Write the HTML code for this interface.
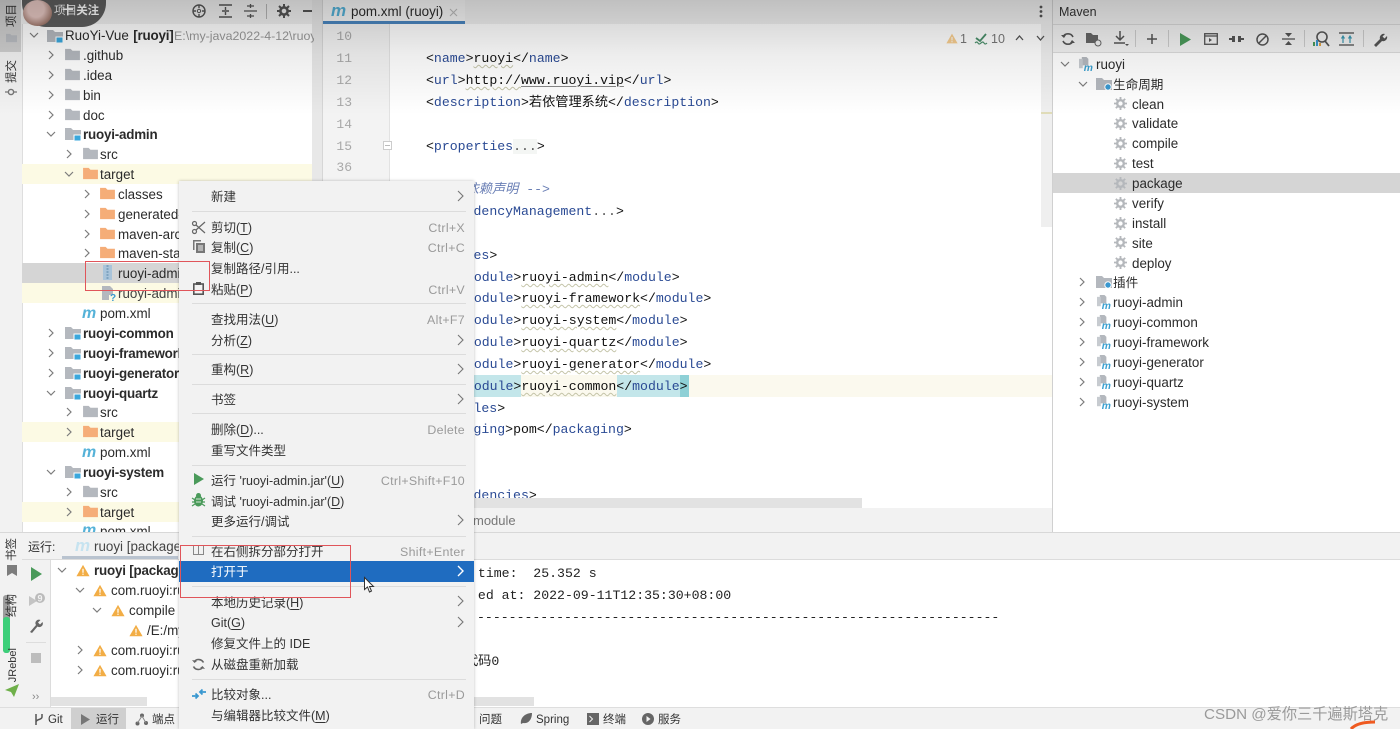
<!DOCTYPE html>
<html><head><meta charset="utf-8"><style>
html,body{margin:0;padding:0;background:#fff}
#p{position:relative;width:1400px;height:729px;overflow:hidden;background:#fff;font-family:"Liberation Sans","Noto Sans CJK SC",sans-serif;color:#2b2b2b}
.a{position:absolute}
.t{position:absolute;font-size:13.4px;line-height:20px;height:20px;white-space:nowrap;margin-top:1px}
.b,.t b{font-weight:bold;letter-spacing:-.2px}
.c{position:absolute;font:13.2px/22px "Liberation Mono","Noto Sans CJK SC",monospace;white-space:pre;color:#111;height:22px;margin-top:1px}
.c i{font-style:normal;color:#2a4a94}
.w{text-decoration:underline wavy #c4c4a8 1px;text-underline-offset:2px}
.l{text-decoration:underline #888 1px;text-underline-offset:2px}
.n{position:absolute;left:330px;width:22px;text-align:right;font:13px/22px "Liberation Mono",monospace;color:#a8a8a8;margin-top:1px}
.m{position:absolute;left:211px;font-size:12.5px;line-height:20px;white-space:nowrap;color:#333;margin-top:1px}
.m u{text-underline-offset:2px}
.s{position:absolute;right:935px;font-size:12.4px;line-height:20px;color:#9a9a9a;white-space:nowrap;letter-spacing:.3px;margin-top:1px}
.h{position:absolute;left:192px;width:274px;height:1px;background:#dcdcdc}
.ar{position:absolute;left:456px;width:8px;height:10px}
svg{position:absolute;overflow:visible}
.side{position:absolute;font-size:11.5px;color:#333;writing-mode:vertical-rl;text-orientation:sideways;transform:rotate(180deg);line-height:14px;white-space:nowrap}
.st{position:absolute;top:712px;font-size:11.5px;line-height:17px;color:#333;white-space:nowrap}
</style></head><body><div id="p">
<svg width="0" height="0" style="position:absolute"><defs>
<symbol id="f" viewBox="0 0 16 14"><path d="M0 1h6l2 2h8v10H0z" fill="#b4b8be"/></symbol>
<symbol id="o" viewBox="0 0 16 14"><path d="M0 1h6l2 2h8v10H0z" fill="#f5ad78"/></symbol>
<symbol id="mf" viewBox="0 0 16 14"><path d="M0 1h6l2 2h8v10H0z" fill="#b4b8be"/><rect x="9" y="8" width="7" height="6" fill="#3aa7dc" stroke="#fff"/></symbol>
<symbol id="r" viewBox="0 0 10 10"><path d="M3 1l4 4-4 4" fill="none" stroke="#7c7c7c" stroke-width="1.2"/></symbol>
<symbol id="d" viewBox="0 0 10 10"><path d="M1 3l4 4 4-4" fill="none" stroke="#7c7c7c" stroke-width="1.2"/></symbol>
<symbol id="g" viewBox="0 0 14 14"><circle cx="7" cy="7" r="3.6" fill="none" stroke="#b5b8bc" stroke-width="2.6"/><path d="M7 0v3M7 11v3M0 7h3M11 7h3M2 2l2 2M10 10l2 2M12 2l-2 2M2 12l2-2" stroke="#b5b8bc" stroke-width="2"/></symbol>
<symbol id="w" viewBox="0 0 16 14"><path d="M8 .5L15.5 13.5H.5z" fill="#f2ad45"/><path d="M8 5v4.5M8 10.5v1.5" stroke="#fff" stroke-width="1.4"/></symbol>
<symbol id="mv" viewBox="0 0 16 17"><path d="M3 1h5l2 2v7H3z" fill="#b4b8be"/><rect x="0" y="3" width="4" height="10" fill="#c7cbd0"/><text x="5" y="16" font-family="Liberation Sans" font-size="11" font-style="italic" font-weight="bold" fill="#3aa0d0">m</text></symbol>
<symbol id="cf" viewBox="0 0 16 14"><path d="M0 1h6l2 2h8v10H0z" fill="#b4b8be"/><circle cx="12" cy="10" r="3.2" fill="#3a98d0" stroke="#fff"/></symbol>
</defs></svg>

<!-- left side strip -->
<div class="a" style="left:0;top:0;width:22px;height:708px;background:#f2f2f2;border-right:1px solid #dedede"></div>
<div class="a" style="left:0;top:0;width:21px;height:52px;background:#cfcfcf"></div>
<div class="side" style="left:5px;top:4px">项目</div>
<svg style="left:6px;top:33px" width="11" height="10"><use href="#f" width="11" height="10" style="opacity:.8"/></svg>
<div class="side" style="left:5px;top:60px">提交</div>
<svg style="left:5px;top:87px" width="12" height="10"><circle cx="6" cy="5" r="2.6" fill="none" stroke="#777" stroke-width="1.4"/><path d="M0 5h3M9 5h3" stroke="#777" stroke-width="1.3"/></svg>
<div class="side" style="left:5px;top:538px">书签</div>
<svg style="left:7px;top:565px" width="10" height="11"><path d="M0 0h10v11L5 8 0 11z" fill="#7d7d7d"/></svg>
<div class="a" style="left:3px;top:595px;width:7px;height:58px;background:#9d9d9d;border-radius:3px"></div>
<div class="a" style="left:3px;top:617px;width:7px;height:36px;background:#3dcf7a;border-radius:3px"></div>
<div class="side" style="left:5px;top:594px">结构</div>
<div class="side" style="left:6px;top:648px;font-size:11px">JRebel</div>
<svg style="left:5px;top:684px" width="14" height="14"><path d="M0 6L14 0 9 13 6 8z" fill="#6fb04a"/></svg>

<!-- project tool header -->
<div class="a" style="left:22px;top:0;width:300px;height:24px;background:#f0f0f0"></div>
<div class="a" style="left:22px;top:0;width:84px;height:27px;background:#5e5e5e;border-radius:0 0 24px 24px"></div>
<div class="a" style="left:23px;top:0;width:29px;height:26px;border-radius:50%;background:radial-gradient(circle at 45% 35%,#e8c9c4 0 35%,#a78074 70%,#5a453d 100%)"></div>
<div class="a" style="left:54px;top:3px;font-size:11.5px;color:#eee;line-height:16px;white-space:nowrap">项目</div>
<div class="a b" style="left:62px;top:3px;font-size:11.5px;color:#fff;line-height:16px;white-space:nowrap">十 关注</div>
<svg style="left:192px;top:4px" width="14" height="14"><circle cx="7" cy="7" r="6" fill="none" stroke="#555" stroke-width="1.4"/><circle cx="7" cy="7" r="1.7" fill="none" stroke="#555"/><path d="M7 1v3M7 10v3M1 7h3M10 7h3" stroke="#555" stroke-width="1.4"/></svg>
<svg style="left:219px;top:4px" width="13" height="14"><path d="M0 1h13M0 13h13M3 7h7M6.500 3v3M6.500 11V8" stroke="#555" stroke-width="1.4" fill="none"/></svg>
<svg style="left:244px;top:4px" width="13" height="14"><path d="M0 7h13M3 2h7M3 12h7M6.500 0v4M6.500 14v-4" stroke="#555" stroke-width="1.3" fill="none"/></svg>
<div class="a" style="left:266px;top:4px;width:1px;height:15px;background:#b5b5b5"></div>
<svg style="left:277px;top:4px" width="14" height="14" viewBox="0 0 14 14"><circle cx="7" cy="7" r="3.6" fill="none" stroke="#555" stroke-width="2.6"/><path d="M7 0v3M7 11v3M0 7h3M11 7h3M2 2l2 2M10 10l2 2M12 2l-2 2M2 12l2-2" stroke="#555" stroke-width="2"/></svg>
<div class="a" style="left:303px;top:10px;width:12px;height:2px;background:#555"></div>

<!-- project tree -->
<div class="a" style="left:22px;top:164px;width:300px;height:20px;background:#fcfae4"></div>
<div class="a" style="left:22px;top:283px;width:300px;height:20px;background:#fcfae4"></div>
<div class="a" style="left:22px;top:422px;width:300px;height:20px;background:#fcfae4"></div>
<div class="a" style="left:22px;top:502px;width:300px;height:20px;background:#fcfae4"></div>
<div class="a" style="left:22px;top:263px;width:300px;height:20px;background:#d5d5d5"></div>
<div class="a" style="left:312px;top:0;width:10px;height:182px;background:#e8e8e8"></div>
<div class="a" style="left:322px;top:0;width:1px;height:532px;background:#d6d6d6"></div>

<svg style="left:29px;top:30px" width="10" height="10"><use href="#d" width="10" height="10"/></svg><svg style="left:47px;top:29px" width="16" height="14"><use href="#mf" width="16" height="14"/></svg><div class="t" style="left:65px;top:25px">RuoYi-Vue<b style="margin-left:1px"> [ruoyi]</b><span style="color:#999;position:absolute;left:109px;top:0;width:140px;overflow:hidden;font-size:12.4px">E:\my-java2022-4-12\ruoyi</span></div>
<svg style="left:46px;top:50px" width="10" height="10"><use href="#r" width="10" height="10"/></svg><svg style="left:65px;top:48px" width="15" height="13"><use href="#f" width="15" height="13"/></svg><div class="t" style="left:83px;top:45px">.github</div>
<svg style="left:46px;top:70px" width="10" height="10"><use href="#r" width="10" height="10"/></svg><svg style="left:65px;top:68px" width="15" height="13"><use href="#f" width="15" height="13"/></svg><div class="t" style="left:83px;top:65px">.idea</div>
<svg style="left:46px;top:90px" width="10" height="10"><use href="#r" width="10" height="10"/></svg><svg style="left:65px;top:88px" width="15" height="13"><use href="#f" width="15" height="13"/></svg><div class="t" style="left:83px;top:85px">bin</div>
<svg style="left:46px;top:110px" width="10" height="10"><use href="#r" width="10" height="10"/></svg><svg style="left:65px;top:108px" width="15" height="13"><use href="#f" width="15" height="13"/></svg><div class="t" style="left:83px;top:105px">doc</div>
<svg style="left:46px;top:129px" width="10" height="10"><use href="#d" width="10" height="10"/></svg><svg style="left:65px;top:127px" width="16" height="14"><use href="#mf" width="16" height="14"/></svg><div class="t b" style="left:83px;top:124px">ruoyi-admin</div>
<svg style="left:64px;top:149px" width="10" height="10"><use href="#r" width="10" height="10"/></svg><svg style="left:83px;top:147px" width="15" height="13"><use href="#f" width="15" height="13"/></svg><div class="t" style="left:100px;top:144px">src</div>
<svg style="left:64px;top:169px" width="10" height="10"><use href="#d" width="10" height="10"/></svg><svg style="left:83px;top:167px" width="15" height="13"><use href="#o" width="15" height="13"/></svg><div class="t" style="left:100px;top:164px">target</div>
<svg style="left:82px;top:189px" width="10" height="10"><use href="#r" width="10" height="10"/></svg><svg style="left:100px;top:187px" width="15" height="13"><use href="#o" width="15" height="13"/></svg><div class="t" style="left:118px;top:184px">classes</div>
<svg style="left:82px;top:209px" width="10" height="10"><use href="#r" width="10" height="10"/></svg><svg style="left:100px;top:207px" width="15" height="13"><use href="#o" width="15" height="13"/></svg><div class="t" style="left:118px;top:204px">generated-sources</div>
<svg style="left:82px;top:229px" width="10" height="10"><use href="#r" width="10" height="10"/></svg><svg style="left:100px;top:227px" width="15" height="13"><use href="#o" width="15" height="13"/></svg><div class="t" style="left:118px;top:224px">maven-archiver</div>
<svg style="left:82px;top:248px" width="10" height="10"><use href="#r" width="10" height="10"/></svg><svg style="left:100px;top:246px" width="15" height="13"><use href="#o" width="15" height="13"/></svg><div class="t" style="left:118px;top:243px">maven-status</div>
<svg style="left:103px;top:265px" width="9" height="15"><rect width="9" height="15" fill="#a9c4da"/><path d="M4.500 0v15" stroke="#7fa3c0" stroke-dasharray="2 1" stroke-width="2"/></svg><div class="t" style="left:118px;top:263px">ruoyi-admin.jar</div>
<svg style="left:102px;top:286px" width="15" height="15"><path d="M0 0h8l3 3v6H7v5H0z" fill="#b4b8be"/><text x="8" y="15" font-family="Liberation Sans" font-size="10" font-weight="bold" fill="#3a98d0">?</text></svg><div class="t" style="left:118px;top:283px;color:#444">ruoyi-admin.jar.original</div>
<div class="t" style="left:82px;top:303px;font:italic bold 16px/20px 'Liberation Sans';color:#55b2d8">m</div><div class="t" style="left:100px;top:303px">pom.xml</div>
<svg style="left:46px;top:328px" width="10" height="10"><use href="#r" width="10" height="10"/></svg><svg style="left:65px;top:326px" width="16" height="14"><use href="#mf" width="16" height="14"/></svg><div class="t b" style="left:83px;top:323px">ruoyi-common</div>
<svg style="left:46px;top:348px" width="10" height="10"><use href="#r" width="10" height="10"/></svg><svg style="left:65px;top:346px" width="16" height="14"><use href="#mf" width="16" height="14"/></svg><div class="t b" style="left:83px;top:343px">ruoyi-framework</div>
<svg style="left:46px;top:368px" width="10" height="10"><use href="#r" width="10" height="10"/></svg><svg style="left:65px;top:366px" width="16" height="14"><use href="#mf" width="16" height="14"/></svg><div class="t b" style="left:83px;top:363px">ruoyi-generator</div>
<svg style="left:46px;top:388px" width="10" height="10"><use href="#d" width="10" height="10"/></svg><svg style="left:65px;top:386px" width="16" height="14"><use href="#mf" width="16" height="14"/></svg><div class="t b" style="left:83px;top:383px">ruoyi-quartz</div>
<svg style="left:64px;top:407px" width="10" height="10"><use href="#r" width="10" height="10"/></svg><svg style="left:83px;top:405px" width="15" height="13"><use href="#f" width="15" height="13"/></svg><div class="t" style="left:100px;top:402px">src</div>
<svg style="left:64px;top:427px" width="10" height="10"><use href="#r" width="10" height="10"/></svg><svg style="left:83px;top:425px" width="15" height="13"><use href="#o" width="15" height="13"/></svg><div class="t" style="left:100px;top:422px">target</div>
<div class="t" style="left:82px;top:442px;font:italic bold 16px/20px 'Liberation Sans';color:#55b2d8">m</div><div class="t" style="left:100px;top:442px">pom.xml</div>
<svg style="left:46px;top:467px" width="10" height="10"><use href="#d" width="10" height="10"/></svg><svg style="left:65px;top:465px" width="16" height="14"><use href="#mf" width="16" height="14"/></svg><div class="t b" style="left:83px;top:462px">ruoyi-system</div>
<svg style="left:64px;top:487px" width="10" height="10"><use href="#r" width="10" height="10"/></svg><svg style="left:83px;top:485px" width="15" height="13"><use href="#f" width="15" height="13"/></svg><div class="t" style="left:100px;top:482px">src</div>
<svg style="left:64px;top:507px" width="10" height="10"><use href="#r" width="10" height="10"/></svg><svg style="left:83px;top:505px" width="15" height="13"><use href="#o" width="15" height="13"/></svg><div class="t" style="left:100px;top:502px">target</div>
<div class="a" style="left:22px;top:522px;width:300px;height:10px;overflow:hidden"><div class="t" style="left:60px;top:-2px;font:italic bold 16px/20px 'Liberation Sans';color:#55b2d8">m</div><div class="t" style="left:78px;top:-1px">pom.xml</div></div>

<!-- editor -->
<div class="a" style="left:323px;top:0;width:729px;height:24px;background:#f0f0f0"></div>
<div class="a" style="left:323px;top:0;width:142px;height:24px;background:#f6f6f6"></div>
<div class="a" style="left:323px;top:21px;width:142px;height:3px;background:#4a86c0"></div>
<div class="a" style="left:331px;top:1px;font:italic bold 17px/20px 'Liberation Sans';color:#55b2d8">m</div>
<div class="t" style="left:351px;top:1px">pom.xml (ruoyi)</div>
<svg style="left:449px;top:8px" width="9" height="9"><path d="M1 1l7 7M8 1L1 8" stroke="#bbb" stroke-width="1.1"/></svg>
<svg style="left:1039px;top:5px" width="4" height="13"><circle cx="2" cy="2" r="1.4" fill="#555"/><circle cx="2" cy="6.500" r="1.4" fill="#555"/><circle cx="2" cy="11" r="1.4" fill="#555"/></svg>
<div class="a" style="left:323px;top:24px;width:66px;height:486px;background:#f3f3f3;border-right:1px solid #e2e2e2"></div>
<div class="a" style="left:389px;top:375px;width:663px;height:22px;background:#fbf9ee"></div>
<div class="a" style="left:474px;top:375px;width:47px;height:22px;background:#c3e6ea"></div>
<div class="a" style="left:617px;top:375px;width:72px;height:22px;background:#c3e6ea"></div>
<div class="a" style="left:680px;top:375px;width:9px;height:22px;background:#8ed0d6"></div>
<div class="a" style="left:1041px;top:24px;width:11px;height:203px;background:#efefef"></div>
<div class="a" style="left:1041px;top:112px;width:11px;height:2px;background:#e0dcb8"></div>
<div class="a" style="left:1052px;top:0;width:1px;height:532px;background:#d0d0d0"></div>

<div class="n" style="top:25px">10</div><div class="n" style="top:47px">11</div><div class="n" style="top:69px">12</div><div class="n" style="top:91px">13</div><div class="n" style="top:113px">14</div><div class="n" style="top:135px">15</div><div class="n" style="top:156px">36</div>
<svg style="left:383px;top:141px" width="9" height="9"><rect x=".5" y=".5" width="8" height="8" fill="#fff" stroke="#ccc"/><path d="M2 4.500h5" stroke="#bbb"/></svg>

<div class="c" style="left:426px;top:47px">&lt;<i>name</i>&gt;<span class="w">ruoyi</span>&lt;/<i>name</i>&gt;</div>
<div class="c" style="left:426px;top:69px">&lt;<i>url</i>&gt;<span class="w">http://</span><span class="l">www.ruoyi.vip</span>&lt;/<i>url</i>&gt;</div>
<div class="c" style="left:426px;top:91px">&lt;<i>description</i>&gt;若依管理系统&lt;/<i>description</i>&gt;</div>
<div class="c" style="left:426px;top:135px">&lt;<i>properties</i><span style="background:#f4f6f4;color:#555">...</span>&gt;</div>
<div class="c" style="left:426px;top:178px;color:#6a7fb5;font-style:italic">&lt;!-- 依赖声明 --&gt;</div>
<div class="c" style="left:426px;top:200px">&lt;<i>dependencyManagement</i><span style="color:#555">...</span>&gt;</div>
<div class="c" style="left:426px;top:244px">&lt;<i>modules</i>&gt;</div>
<div class="c" style="left:458px;top:266px">&lt;<i>module</i>&gt;<span class="w">ruoyi-admin</span>&lt;/<i>module</i>&gt;</div>
<div class="c" style="left:458px;top:287px">&lt;<i>module</i>&gt;<span class="w">ruoyi-framework</span>&lt;/<i>module</i>&gt;</div>
<div class="c" style="left:458px;top:309px">&lt;<i>module</i>&gt;<span class="w">ruoyi-system</span>&lt;/<i>module</i>&gt;</div>
<div class="c" style="left:458px;top:331px">&lt;<i>module</i>&gt;<span class="w">ruoyi-quartz</span>&lt;/<i>module</i>&gt;</div>
<div class="c" style="left:458px;top:353px">&lt;<i>module</i>&gt;<span class="w">ruoyi-generator</span>&lt;/<i>module</i>&gt;</div>
<div class="c" style="left:458px;top:375px">&lt;<i>module</i>&gt;<span class="w">ruoyi-common</span>&lt;/<i>module</i>&gt;</div>
<div class="c" style="left:426px;top:397px">&lt;/<i>modules</i>&gt;</div>
<div class="c" style="left:426px;top:418px">&lt;<i>packaging</i>&gt;pom&lt;/<i>packaging</i>&gt;</div>
<div class="c" style="left:426px;top:484px">&lt;<i>dependencies</i>&gt;</div>

<svg style="left:946px;top:33px" width="12" height="11"><use href="#w" width="12" height="11" style="opacity:.6"/></svg>
<div class="t" style="left:960px;top:28px;color:#777;font-size:12.5px">1</div>
<svg style="left:975px;top:33px" width="13" height="12"><path d="M1 5l4 3 6-7" fill="none" stroke="#4a8f6a" stroke-width="1.800"/><path d="M0 10q2-2 3 0t3 0 3 0 3 0" fill="none" stroke="#4a8f6a" stroke-width="1.200"/></svg>
<div class="t" style="left:991px;top:28px;color:#777;font-size:12.5px">10</div>
<svg style="left:1015px;top:34px" width="9" height="7"><path d="M1 6l3.500-4L8 6" fill="none" stroke="#555" stroke-width="1.300"/></svg>
<svg style="left:1036px;top:35px" width="9" height="7"><path d="M1 1l3.500 4L8 1" fill="none" stroke="#555" stroke-width="1.300"/></svg>

<div class="a" style="left:474px;top:498px;width:388px;height:10px;background:#e2e2e2"></div>
<div class="a" style="left:323px;top:508px;width:729px;height:24px;background:#f2f2f2"></div>
<div class="t" style="left:473px;top:510px;color:#777;font-size:13px">module</div>
<div class="a" style="left:0;top:532px;width:1400px;height:1px;background:#d8d8d8"></div>

<!-- maven -->
<div class="a" style="left:1053px;top:0;width:347px;height:24px;background:#f0f0f0;border-bottom:1px solid #d8d8d8"></div>
<div class="t" style="left:1059px;top:1px;font-size:12.5px;color:#333">Maven</div>
<div class="a" style="left:1053px;top:25px;width:347px;height:27px;background:#f2f2f2;border-bottom:1px solid #dcdcdc"></div>
<svg style="left:1061px;top:32px" width="14" height="14"><path d="M12 5A5.500 5.500 0 0 0 2 5M2 9a5.500 5.500 0 0 0 10 0" fill="none" stroke="#555" stroke-width="1.600"/><path d="M0 3l3 3 2-3M14 11l-3-3-2 3" fill="#555"/></svg>
<svg style="left:1086px;top:32px" width="16" height="15"><path d="M0 1h5l2 2h5v8H0z" fill="#666"/><circle cx="12" cy="11" r="3" fill="#f2f2f2" stroke="#666"/></svg>
<svg style="left:1113px;top:31px" width="16" height="16"><path d="M7 0v8M3 5l4 4 4-4M1 12h11" fill="none" stroke="#555" stroke-width="1.500"/><path d="M12 13h4l-2 2z" fill="#555"/></svg>
<div class="a" style="left:1135px;top:30px;width:1px;height:17px;background:#ccc"></div>
<svg style="left:1146px;top:33px" width="12" height="12"><path d="M6 1v10M1 6h10" stroke="#555" stroke-width="1.500"/></svg>
<div class="a" style="left:1168px;top:30px;width:1px;height:17px;background:#ccc"></div>
<svg style="left:1180px;top:33px" width="11" height="13"><path d="M0 0l11 6.500L0 13z" fill="#4a9a5a"/></svg>
<svg style="left:1204px;top:33px" width="14" height="12"><rect x=".7" y=".7" width="12.600" height="10.600" fill="none" stroke="#555" stroke-width="1.300"/><path d="M1 3h12" stroke="#555" stroke-width="1.300"/><path d="M5 5l3 2-3 2z" fill="#555"/></svg>
<svg style="left:1229px;top:31px" width="15" height="16"><path d="M0 8h5M10 8h5" stroke="#555" stroke-width="2"/><rect x="3" y="5" width="3" height="6" fill="#555"/><rect x="9" y="5" width="3" height="6" fill="#555"/><path d="M6 14L9 2" stroke="#f2f2f2" stroke-width="1.500"/></svg>
<svg style="left:1256px;top:33px" width="13" height="13"><circle cx="6.500" cy="6.500" r="5.500" fill="none" stroke="#555" stroke-width="1.500"/><path d="M3 10l7-7" stroke="#555" stroke-width="1.500"/></svg>
<svg style="left:1282px;top:32px" width="13" height="14"><path d="M0 7h13" stroke="#555" stroke-width="1.300"/><path d="M3 1h7L6.500 5zM3 13h7L6.500 9z" fill="#555"/></svg>
<div class="a" style="left:1304px;top:30px;width:1px;height:17px;background:#ccc"></div>
<svg style="left:1313px;top:31px" width="17" height="16"><circle cx="9" cy="6" r="5" fill="none" stroke="#555" stroke-width="1.600"/><path d="M12 10l4 5" stroke="#555" stroke-width="1.800"/><path d="M1 15v-4" stroke="#4a9a5a" stroke-width="2"/><path d="M4 15V9" stroke="#3a98d0" stroke-width="2"/><path d="M7 15v-3" stroke="#e0a040" stroke-width="2"/></svg>
<svg style="left:1339px;top:32px" width="15" height="14"><rect width="15" height="2" fill="#888"/><rect y="12" width="15" height="2" fill="#888"/><path d="M4 11V5M11 11V5M2.500 6.500L4 4l1.500 2.500M9.500 6.500L11 4l1.500 2.500" stroke="#3a98b0" fill="none" stroke-width="1.200"/></svg>
<div class="a" style="left:1363px;top:30px;width:1px;height:17px;background:#ccc"></div>
<svg style="left:1373px;top:32px" width="16" height="15"><path d="M1 13L7 7a4 4 0 0 1 5-5L9.500 4.500l2 2L14 4a4 4 0 0 1-5 5l-6 6z" fill="#555"/></svg>

<div class="a" style="left:1053px;top:173px;width:347px;height:20px;background:#d5d5d5"></div>
<svg style="left:1060px;top:59px" width="10" height="10"><use href="#d" width="10" height="10"/></svg><svg style="left:1079px;top:56px" width="15" height="16"><use href="#mv" width="15" height="16"/></svg><div class="t" style="left:1096px;top:54px">ruoyi</div>
<svg style="left:1078px;top:79px" width="10" height="10"><use href="#d" width="10" height="10"/></svg><svg style="left:1096px;top:77px" width="16" height="14"><use href="#cf" width="16" height="14"/></svg><div class="t" style="left:1113px;top:74px;font-size:12.6px">生命周期</div>
<svg style="left:1114px;top:97px" width="13" height="13"><use href="#g" width="13" height="13"/></svg><div class="t" style="left:1132px;top:94px">clean</div>
<svg style="left:1114px;top:117px" width="13" height="13"><use href="#g" width="13" height="13"/></svg><div class="t" style="left:1132px;top:113px">validate</div>
<svg style="left:1114px;top:137px" width="13" height="13"><use href="#g" width="13" height="13"/></svg><div class="t" style="left:1132px;top:133px">compile</div>
<svg style="left:1114px;top:157px" width="13" height="13"><use href="#g" width="13" height="13"/></svg><div class="t" style="left:1132px;top:153px">test</div>
<svg style="left:1114px;top:177px" width="13" height="13"><use href="#g" width="13" height="13"/></svg><div class="t" style="left:1132px;top:173px">package</div>
<svg style="left:1114px;top:197px" width="13" height="13"><use href="#g" width="13" height="13"/></svg><div class="t" style="left:1132px;top:193px">verify</div>
<svg style="left:1114px;top:217px" width="13" height="13"><use href="#g" width="13" height="13"/></svg><div class="t" style="left:1132px;top:213px">install</div>
<svg style="left:1114px;top:236px" width="13" height="13"><use href="#g" width="13" height="13"/></svg><div class="t" style="left:1132px;top:233px">site</div>
<svg style="left:1114px;top:256px" width="13" height="13"><use href="#g" width="13" height="13"/></svg><div class="t" style="left:1132px;top:253px">deploy</div>
<svg style="left:1077px;top:277px" width="10" height="10"><use href="#r" width="10" height="10"/></svg><svg style="left:1096px;top:275px" width="16" height="14"><use href="#cf" width="16" height="14"/></svg><div class="t" style="left:1113px;top:272px;font-size:12.6px">插件</div>
<svg style="left:1077px;top:297px" width="10" height="10"><use href="#r" width="10" height="10"/></svg><svg style="left:1097px;top:294px" width="15" height="16"><use href="#mv" width="15" height="16"/></svg><div class="t" style="left:1113px;top:292px">ruoyi-admin</div>
<svg style="left:1077px;top:317px" width="10" height="10"><use href="#r" width="10" height="10"/></svg><svg style="left:1097px;top:314px" width="15" height="16"><use href="#mv" width="15" height="16"/></svg><div class="t" style="left:1113px;top:312px">ruoyi-common</div>
<svg style="left:1077px;top:337px" width="10" height="10"><use href="#r" width="10" height="10"/></svg><svg style="left:1097px;top:334px" width="15" height="16"><use href="#mv" width="15" height="16"/></svg><div class="t" style="left:1113px;top:332px">ruoyi-framework</div>
<svg style="left:1077px;top:357px" width="10" height="10"><use href="#r" width="10" height="10"/></svg><svg style="left:1097px;top:354px" width="15" height="16"><use href="#mv" width="15" height="16"/></svg><div class="t" style="left:1113px;top:352px">ruoyi-generator</div>
<svg style="left:1077px;top:377px" width="10" height="10"><use href="#r" width="10" height="10"/></svg><svg style="left:1097px;top:374px" width="15" height="16"><use href="#mv" width="15" height="16"/></svg><div class="t" style="left:1113px;top:372px">ruoyi-quartz</div>
<svg style="left:1077px;top:397px" width="10" height="10"><use href="#r" width="10" height="10"/></svg><svg style="left:1097px;top:394px" width="15" height="16"><use href="#mv" width="15" height="16"/></svg><div class="t" style="left:1113px;top:392px">ruoyi-system</div>

<!-- top video shade -->
<div class="a" style="left:0;top:0;width:1400px;height:115px;background:linear-gradient(to bottom,rgba(0,0,0,.2) 0,rgba(0,0,0,.14) 24px,rgba(0,0,0,.07) 55px,rgba(0,0,0,0) 115px)"></div>

<!-- run panel -->
<div class="a" style="left:22px;top:533px;width:1378px;height:26px;background:#f2f2f2;border-bottom:1px solid #dcdcdc"></div>
<div class="t" style="left:28px;top:536px;font-size:12px;color:#333">运行:</div>
<div class="a" style="left:62px;top:556px;width:116px;height:3px;background:#b9c3cf"></div>
<div class="a" style="left:75px;top:536px;font:italic bold 17px/20px 'Liberation Sans';color:#c6e3f0">m</div>
<div class="t" style="left:94px;top:536px;color:#444">ruoyi [package]</div>
<div class="a" style="left:22px;top:560px;width:28px;height:148px;background:#f2f2f2;border-right:1px solid #dcdcdc"></div>
<svg style="left:31px;top:567px" width="11" height="14"><path d="M0 0l11 7-11 7z" fill="#4a9a5a"/></svg>
<svg style="left:28px;top:592px" width="17" height="16"><path d="M1 4l8 5-8 5z" fill="#c4c4c4"/><circle cx="12" cy="6" r="5" fill="#bbb"/><text x="9.500" y="9.500" font-family="Liberation Sans" font-size="9" font-weight="bold" fill="#f2f2f2">9</text></svg>
<svg style="left:29px;top:619px" width="15" height="14"><path d="M1 13L7 6a3.500 3.500 0 0 1 4.500-5L9 3.500l2 2L13.500 3a3.500 3.500 0 0 1-5 4.500L3 14z" fill="#666"/></svg>
<div class="a" style="left:26px;top:642px;width:20px;height:1px;background:#ddd"></div>
<div class="a" style="left:31px;top:653px;width:10px;height:10px;background:#bdbdbd"></div>
<div class="a" style="left:32px;top:690px;font-size:11px;line-height:14px;color:#888">››</div>
<svg style="left:57px;top:565px" width="10" height="10"><use href="#d" width="10" height="10"/></svg><svg style="left:76px;top:564px" width="14" height="13"><use href="#w" width="14" height="13"/></svg><div class="t b" style="left:94px;top:560px;width:85px;overflow:hidden">ruoyi [package]</div>
<svg style="left:75px;top:585px" width="10" height="10"><use href="#d" width="10" height="10"/></svg><svg style="left:93px;top:584px" width="14" height="13"><use href="#w" width="14" height="13"/></svg><div class="t" style="left:111px;top:580px;width:68px;overflow:hidden">com.ruoyi:ruoyi</div>
<svg style="left:92px;top:605px" width="10" height="10"><use href="#d" width="10" height="10"/></svg><svg style="left:111px;top:604px" width="14" height="13"><use href="#w" width="14" height="13"/></svg><div class="t" style="left:129px;top:600px">compile</div>
<svg style="left:129px;top:624px" width="14" height="13"><use href="#w" width="14" height="13"/></svg><div class="t" style="left:147px;top:620px;width:32px;overflow:hidden">/E:/my-java</div>
<svg style="left:75px;top:645px" width="10" height="10"><use href="#r" width="10" height="10"/></svg><svg style="left:93px;top:644px" width="14" height="13"><use href="#w" width="14" height="13"/></svg><div class="t" style="left:111px;top:640px;width:68px;overflow:hidden">com.ruoyi:ruoyi</div>
<svg style="left:75px;top:665px" width="10" height="10"><use href="#r" width="10" height="10"/></svg><svg style="left:93px;top:664px" width="14" height="13"><use href="#w" width="14" height="13"/></svg><div class="t" style="left:111px;top:660px;width:68px;overflow:hidden">com.ruoyi:ruoyi</div>
<div class="a" style="left:51px;top:697px;width:96px;height:9px;background:#e2e2e2"></div>
<div class="c" style="left:470px;top:562px;color:#222"> time:  25.352 s</div>
<div class="c" style="left:470px;top:584px;color:#222"> ed at: 2022-09-11T12:35:30+08:00</div>
<div class="c" style="left:477px;top:606px;color:#222">------------------------------------------------------------------</div>
<div class="c" style="left:465px;top:650px;color:#222">代码0</div>
<div class="a" style="left:474px;top:697px;width:60px;height:9px;background:#e2e2e2"></div>

<!-- status bar -->
<div class="a" style="left:0;top:707px;width:1400px;height:22px;background:#f2f2f2;border-top:1px solid #dedede"></div>
<div class="a" style="left:71px;top:708px;width:55px;height:21px;background:#cfcfcf"></div>
<svg style="left:34px;top:713px" width="10" height="13"><path d="M2 1v11M8 1v3c0 3-6 2-6 5" fill="none" stroke="#555" stroke-width="1.500"/></svg>
<div class="st" style="left:48px">Git</div>
<svg style="left:81px;top:714px" width="9" height="11"><path d="M0 0l9 5.500L0 11z" fill="#777"/></svg>
<div class="st" style="left:96px">运行</div>
<svg style="left:135px;top:713px" width="13" height="13"><circle cx="2.500" cy="10.500" r="2" fill="#666"/><circle cx="7" cy="2.500" r="2" fill="#666"/><circle cx="11" cy="10" r="2" fill="#666"/><path d="M2.500 10L7 3l4 7" stroke="#888" fill="none"/></svg>
<div class="st" style="left:152px">端点</div>
<div class="st" style="left:479px">问题</div>
<svg style="left:520px;top:713px" width="12" height="12"><path d="M1 11C0 5 5 0 12 0c0 7-4 11-9 10z" fill="#666"/></svg>
<div class="st" style="left:536px">Spring</div>
<svg style="left:587px;top:713px" width="12" height="12"><rect width="12" height="12" fill="#666"/><path d="M2.500 3l3 3-3 3" stroke="#f2f2f2" fill="none"/></svg>
<div class="st" style="left:603px">终端</div>
<svg style="left:642px;top:713px" width="12" height="12"><circle cx="6" cy="6" r="6" fill="#666"/><path d="M4.500 3l4 3-4 3z" fill="#f2f2f2"/></svg>
<div class="st" style="left:658px">服务</div>
<div class="a" style="left:1204px;top:705px;font-size:15.2px;line-height:20px;color:#9a9a9a;white-space:nowrap">CSDN @爱你三千遍斯塔克</div>
<svg style="left:1350px;top:720px" width="30" height="9"><path d="M1 9q6-7 24-7" fill="none" stroke="#ef5a20" stroke-width="3"/></svg>

<!-- context menu -->
<div class="a" style="left:179px;top:181px;width:295px;height:548px;background:#f2f2f2;box-shadow:0 0 3px rgba(0,0,0,.25)"></div>
<div class="a" style="left:179px;top:561px;width:295px;height:21px;background:#1f6cc0"></div>
<div class="h" style="top:211px"></div><div class="h" style="top:303px"></div><div class="h" style="top:354px"></div><div class="h" style="top:384px"></div><div class="h" style="top:413px"></div><div class="h" style="top:465px"></div><div class="h" style="top:536px"></div><div class="h" style="top:586px"></div><div class="h" style="top:679px"></div>
<div class="m" style="top:186px">新建</div>
<div class="m" style="top:217px">剪切(<u>T</u>)</div><div class="s" style="top:217px">Ctrl+X</div>
<div class="m" style="top:237px">复制(<u>C</u>)</div><div class="s" style="top:237px">Ctrl+C</div>
<div class="m" style="top:258px">复制路径/引用...</div>
<div class="m" style="top:279px">粘贴(<u>P</u>)</div><div class="s" style="top:279px">Ctrl+V</div>
<div class="m" style="top:309px">查找用法(<u>U</u>)</div><div class="s" style="top:309px">Alt+F7</div>
<div class="m" style="top:330px">分析(<u>Z</u>)</div>
<div class="m" style="top:359px">重构(<u>R</u>)</div>
<div class="m" style="top:389px">书签</div>
<div class="m" style="top:419px">删除(<u>D</u>)...</div><div class="s" style="top:419px">Delete</div>
<div class="m" style="top:440px">重写文件类型</div>
<div class="m" style="top:470px">运行 'ruoyi-admin.jar'(<u>U</u>)</div><div class="s" style="top:470px">Ctrl+Shift+F10</div>
<div class="m" style="top:491px">调试 'ruoyi-admin.jar'(<u>D</u>)</div>
<div class="m" style="top:511px">更多运行/调试</div>
<div class="m" style="top:541px">在右侧拆分部分打开</div><div class="s" style="top:541px">Shift+Enter</div>
<div class="m" style="top:561px;color:#fff">打开于</div>
<div class="m" style="top:592px">本地历史记录(<u>H</u>)</div>
<div class="m" style="top:612px">Git(<u>G</u>)</div>
<div class="m" style="top:633px">修复文件上的 IDE</div>
<div class="m" style="top:654px">从磁盘重新加载</div>
<div class="m" style="top:684px">比较对象...</div><div class="s" style="top:684px">Ctrl+D</div>
<div class="m" style="top:705px">与编辑器比较文件(<u>M</u>)</div>
<svg class="ar" style="top:191px"><path d="M2 0l5 5-5 5" fill="none" stroke="#777" stroke-width="1.100"/></svg>
<svg class="ar" style="top:335px"><path d="M2 0l5 5-5 5" fill="none" stroke="#777" stroke-width="1.100"/></svg>
<svg class="ar" style="top:364px"><path d="M2 0l5 5-5 5" fill="none" stroke="#777" stroke-width="1.100"/></svg>
<svg class="ar" style="top:394px"><path d="M2 0l5 5-5 5" fill="none" stroke="#777" stroke-width="1.100"/></svg>
<svg class="ar" style="top:515px"><path d="M2 0l5 5-5 5" fill="none" stroke="#777" stroke-width="1.100"/></svg>
<svg class="ar" style="top:566px"><path d="M2 0l5 5-5 5" fill="none" stroke="#fff" stroke-width="1.400"/></svg>
<svg class="ar" style="top:596px"><path d="M2 0l5 5-5 5" fill="none" stroke="#777" stroke-width="1.100"/></svg>
<svg class="ar" style="top:617px"><path d="M2 0l5 5-5 5" fill="none" stroke="#777" stroke-width="1.100"/></svg>
<svg style="left:192px;top:221px" width="13" height="13"><circle cx="2.500" cy="2.500" r="2" fill="none" stroke="#666" stroke-width="1.200"/><circle cx="2.500" cy="10.500" r="2" fill="none" stroke="#666" stroke-width="1.200"/><path d="M4 4l9 8M4 9l9-8" stroke="#666" stroke-width="1.200"/></svg>
<svg style="left:193px;top:240px" width="12" height="13"><path d="M0 0h8v1.500H1.500V10H0z" fill="#777"/><rect x="3" y="3" width="9" height="10" fill="#777"/><path d="M5 6h5M5 8h5M5 10h5" stroke="#f2f2f2"/></svg>
<svg style="left:193px;top:282px" width="11" height="13"><rect x=".8" y="2" width="9.400" height="10.200" fill="none" stroke="#555" stroke-width="1.600"/><rect x="3" y="0" width="5" height="3" fill="#555"/></svg>
<svg style="left:194px;top:473px" width="10" height="12"><path d="M0 0l10 6-10 6z" fill="#4a9a5a"/></svg>
<svg style="left:192px;top:493px" width="13" height="14"><ellipse cx="6.500" cy="8" rx="4.500" ry="5.500" fill="#4a9a5a"/><circle cx="6.500" cy="2.500" r="2.500" fill="#4a9a5a"/><path d="M0 5l3 2M13 5l-3 2M0 9h3M13 9h-3M0 13l3-2M13 13l-3-2" stroke="#4a9a5a" stroke-width="1.200"/><path d="M4 6h5M4 9h5" stroke="#d6e6d6"/></svg>
<svg style="left:193px;top:545px" width="11" height="10"><rect x=".5" y=".5" width="10" height="9" fill="none" stroke="#888"/><path d="M5.500 0v10" stroke="#888"/></svg>
<svg style="left:192px;top:658px" width="13" height="13"><path d="M11.500 4.500A5.500 5.500 0 0 0 2 4M1.500 8.500A5.500 5.500 0 0 0 11 9" fill="none" stroke="#666" stroke-width="1.600"/><path d="M0 2l2.500 3L5 3zM13 11l-2.500-3L8 10z" fill="#666"/></svg>
<svg style="left:192px;top:687px" width="14" height="14"><path d="M0 9h6M3.500 6.500L6 9l-2.500 2.500" fill="none" stroke="#3a98d0" stroke-width="1.800"/><path d="M14 5H8M10.500 2.500L8 5l2.500 2.500" fill="none" stroke="#3a98d0" stroke-width="1.800"/></svg>

<!-- red annotations -->
<div class="a" style="left:85px;top:261px;width:123px;height:28px;border:1px solid #e0555a"></div>
<div class="a" style="left:180px;top:545px;width:169px;height:51px;border:1px solid #e0555a"></div>
<svg style="left:364px;top:577px" width="11" height="16"><path d="M.5.5v12l3-2.500 2 5 2-1-2-4.500h4z" fill="#fff" stroke="#333"/></svg>
</div></body></html>
